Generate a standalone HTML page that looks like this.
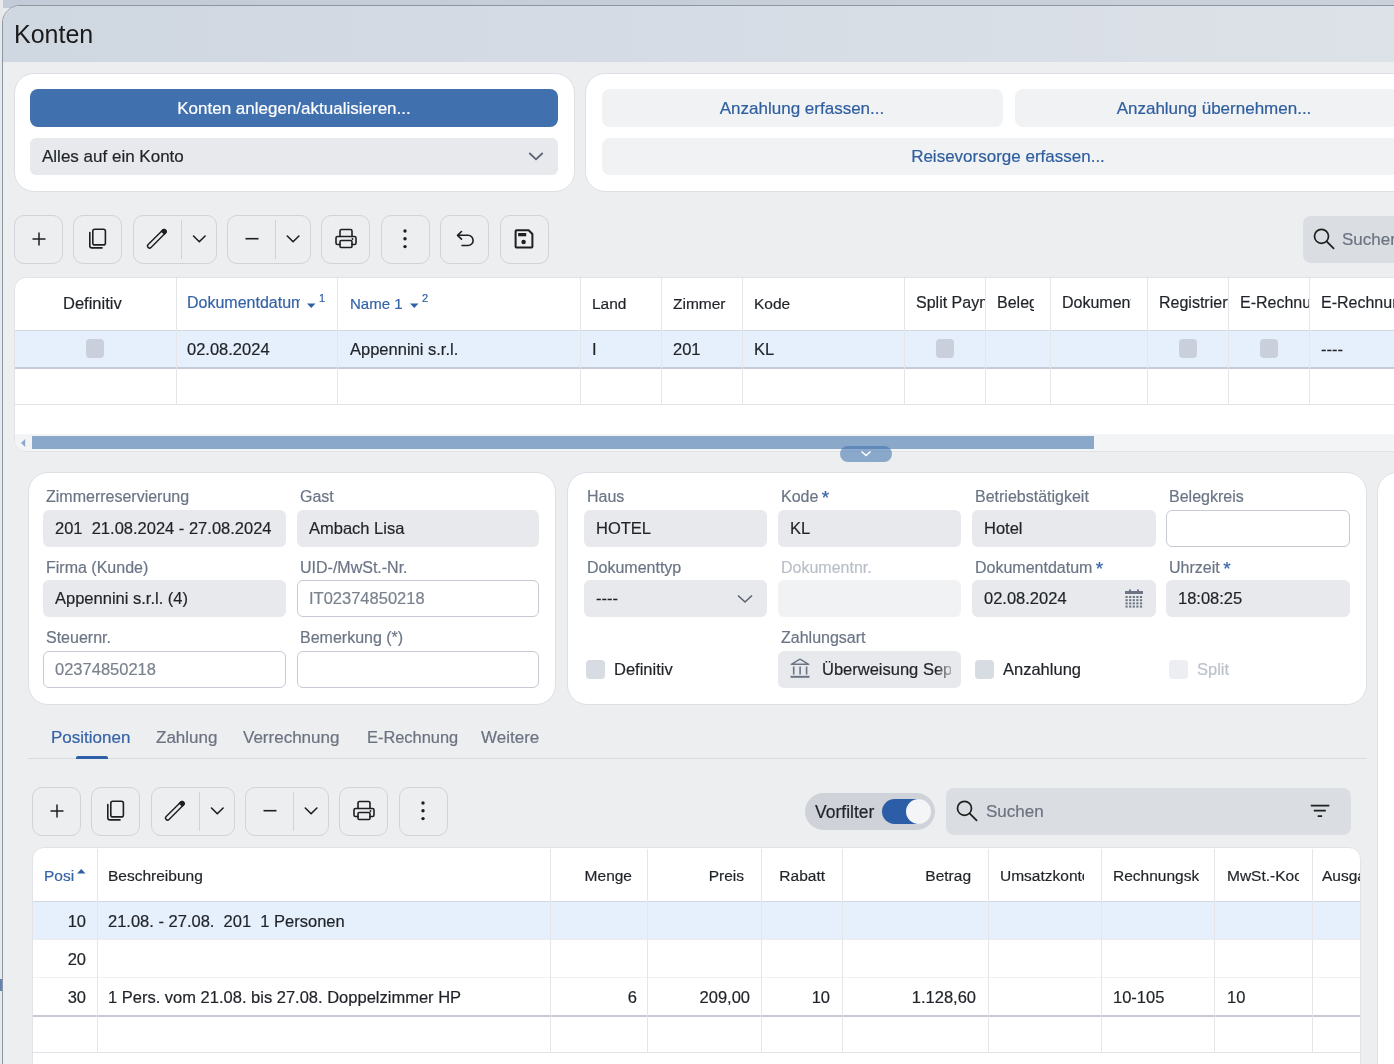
<!DOCTYPE html><html><head><meta charset="utf-8"><style>
*{box-sizing:border-box;margin:0;padding:0}
html,body{width:1394px;height:1064px;overflow:hidden;background:#e9ebee;font-family:"Liberation Sans",sans-serif;color:#1f2328}
.abs{position:absolute}
.t{position:absolute;white-space:nowrap;will-change:transform;-webkit-text-stroke:0.2px currentColor}
.card{position:absolute;background:#fff;border:1px solid #dcdfe4;border-radius:20px}
.tb{position:absolute;border:1px solid #d0d3d9;border-radius:10px;height:49px}
.cb{position:absolute;width:19px;height:19px;border-radius:4px;background:#d7dbe2}
.vl{position:absolute;width:1px;background:#e4e6ea}
.hl{position:absolute;height:1px;background:#e4e6ea}
</style></head><body>
<div class="abs" style="left:0px;top:0px;width:1394px;height:8px;background:linear-gradient(to right,#c2cbd7,#cbd1da);"></div>
<div class="abs" style="left:0px;top:0px;width:3px;height:1064px;background:#e8e9eb;"></div>
<div class="abs" style="left:0px;top:979px;width:2px;height:12px;background:#6283b3;"></div>
<div class="abs" style="left:2px;top:5px;width:1500px;height:1200px;border:1px solid #8d96a3;border-radius:18px 0 0 0;background:#edeef0;overflow:hidden"><div class="abs" style="left:0;top:0;width:1392px;height:56px;background:linear-gradient(to right,#cfd7e1,#d6dce5 50%,#dde2e8)"></div></div>
<div class="t" style="left:14px;top:21.84px;font-size:25px;line-height:25px;color:#1b1b1b;-webkit-text-stroke:0">Konten</div>
<div class="card" style="left:14px;top:73px;width:561px;height:119px"></div>
<div class="abs" style="left:30px;top:89px;width:528px;height:38px;background:#4170ae;border-radius:8px"></div>
<div class="t" style="left:94.0px;top:99.61px;font-size:17px;line-height:17px;color:#ffffff;width:400px;text-align:center;">Konten anlegen/aktualisieren...</div>
<div class="abs" style="left:30px;top:138px;width:528px;height:37px;background:#e8e9ec;border-radius:6px"></div>
<div class="t" style="left:42px;top:147.61px;font-size:17px;line-height:17px;color:#1f2328;">Alles auf ein Konto</div>
<svg class="abs" style="left:527px;top:150px" width="18" height="12"><path d="M2.3 3l6.7 6.3 6.7-6.3" stroke="#5a6270" stroke-width="1.8" fill="none"/></svg>
<div class="card" style="left:585px;top:73px;width:900px;height:119px"></div>
<div class="abs" style="left:602px;top:89px;width:401px;height:38px;background:#f1f2f4;border-radius:8px"></div>
<div class="abs" style="left:1015px;top:89px;width:400px;height:38px;background:#f1f2f4;border-radius:8px"></div>
<div class="abs" style="left:602px;top:138px;width:813px;height:37px;background:#f1f2f4;border-radius:8px"></div>
<div class="t" style="left:602.0px;top:99.61px;font-size:17px;line-height:17px;color:#2f5e9e;width:400px;text-align:center;">Anzahlung erfassen...</div>
<div class="t" style="left:1014.0px;top:99.61px;font-size:17px;line-height:17px;color:#2f5e9e;width:400px;text-align:center;">Anzahlung übernehmen...</div>
<div class="t" style="left:808.0px;top:147.61px;font-size:17px;line-height:17px;color:#2f5e9e;width:400px;text-align:center;">Reisevorsorge erfassen...</div>
<div class="tb" style="left:14px;top:215px;width:49px"></div>
<div class="tb" style="left:73px;top:215px;width:49px"></div>
<div class="tb" style="left:133px;top:215px;width:84px"></div>
<div class="tb" style="left:227px;top:215px;width:84px"></div>
<div class="tb" style="left:321px;top:215px;width:49px"></div>
<div class="tb" style="left:381px;top:215px;width:49px"></div>
<div class="tb" style="left:440px;top:215px;width:49px"></div>
<div class="tb" style="left:500px;top:215px;width:49px"></div>
<svg class="abs" style="left:0px;top:0px" width="600" height="300" viewBox="0 0 600 300"><path d="M39 232.5v13M32.5 239h13" stroke="#1f1f1f" stroke-width="1.5"/><rect x="92.8" y="229.3" width="12.6" height="15.6" rx="2" stroke="#1f1f1f" fill="none" stroke-width="1.6" stroke-linecap="round" stroke-linejoin="round"/><path d="M89.8 232.5v13.2a2.2 2.2 0 0 0 2.2 2.2h10" stroke="#1f1f1f" fill="none" stroke-width="1.6" stroke-linecap="round" stroke-linejoin="round"/><g transform="translate(156.8 238.8) rotate(-45)"><rect x="-12.2" y="-2" width="24.4" height="4" rx="2" stroke="#1f1f1f" fill="none" stroke-width="1.45"/><path d="M8 -2.7h2.3a2.7 2.7 0 0 1 0 5.4h-2.3z" fill="#1f1f1f"/></g><path d="M181.5 220v39M275.5 220v39" stroke="#d0d3d9" stroke-width="1"/><path d="M193.5 236l5.8 5.8 5.8-5.8M287.3 236l5.8 5.8 5.8-5.8" stroke="#1f1f1f" fill="none" stroke-width="1.6" stroke-linecap="round" stroke-linejoin="round"/><path d="M245.5 238.7h13" stroke="#1f1f1f" stroke-width="1.6"/><path d="M340 236.5v-5.5a1.5 1.5 0 0 1 1.5-1.5h9a1.5 1.5 0 0 1 1.5 1.5v5.5" stroke="#1f1f1f" fill="none" stroke-width="1.6" stroke-linecap="round" stroke-linejoin="round"/><path d="M340 244.5h-2.5a1.5 1.5 0 0 1-1.5-1.5v-5a1.5 1.5 0 0 1 1.5-1.5h17a1.5 1.5 0 0 1 1.5 1.5v5a1.5 1.5 0 0 1-1.5 1.5h-2.5" stroke="#1f1f1f" fill="none" stroke-width="1.6" stroke-linecap="round" stroke-linejoin="round"/><rect x="340" y="240.5" width="12" height="7" rx="1.2" stroke="#1f1f1f" fill="none" stroke-width="1.6" stroke-linecap="round" stroke-linejoin="round"/><circle cx="352.5" cy="239" r="0.9" fill="#1f1f1f"/><circle cx="405" cy="231" r="1.7" fill="#1f1f1f"/><circle cx="405" cy="238.8" r="1.7" fill="#1f1f1f"/><circle cx="405" cy="246.6" r="1.7" fill="#1f1f1f"/><path d="M461.5 231.5l-4 3.8 4 3.8M457.8 235.3h10.2a5.1 5.1 0 0 1 0 10.2h-6" stroke="#1f1f1f" fill="none" stroke-width="1.6" stroke-linecap="round" stroke-linejoin="round"/><path d="M515.6 231.4a1.2 1.2 0 0 1 1.2-1.2h11.8l3.8 3.8v12.4a1.2 1.2 0 0 1-1.2 1.2h-14.4a1.2 1.2 0 0 1-1.2-1.2z" stroke="#1f1f1f" fill="none" stroke-width="2" stroke-linejoin="round"/><rect x="518.2" y="233" width="8" height="3.3" fill="#1f1f1f"/><circle cx="523.6" cy="242" r="2.2" fill="#1f1f1f"/></svg>
<div class="abs" style="left:1303px;top:216px;width:200px;height:47px;background:#dadde2;border-radius:8px"></div>
<svg class="abs" style="left:1300px;top:220px" width="50" height="40"><circle cx="21.5" cy="16.3" r="7" stroke="#1f1f1f" stroke-width="1.7" fill="none"/><path d="M26.6 21.4l7 7" stroke="#1f1f1f" stroke-width="1.7" stroke-linecap="round"/></svg>
<div class="t" style="left:1342px;top:230.61px;font-size:17px;line-height:17px;color:#6b7380;">Suchen</div>
<div class="abs" style="left:14px;top:277px;width:1500px;height:175px;background:#fff;border:1px solid #dfe2e6;border-radius:12px 0 0 12px"></div>
<div class="abs" style="left:15px;top:331px;width:1480px;height:37px;background:#e6effc;"></div>
<div class="abs" style="left:15px;top:330px;width:1480px;height:1px;background:#d3d8e0;"></div>
<div class="abs" style="left:15px;top:367px;width:1480px;height:2px;background:#c6cbd4;"></div>
<div class="abs" style="left:15px;top:404px;width:1480px;height:1px;background:#dfe2e7;"></div>
<div class="vl" style="left:176px;top:278px;height:127px"></div>
<div class="vl" style="left:337px;top:278px;height:127px"></div>
<div class="vl" style="left:580px;top:278px;height:127px"></div>
<div class="vl" style="left:661px;top:278px;height:127px"></div>
<div class="vl" style="left:742px;top:278px;height:127px"></div>
<div class="vl" style="left:904px;top:278px;height:127px"></div>
<div class="vl" style="left:985px;top:278px;height:127px"></div>
<div class="vl" style="left:1050px;top:278px;height:127px"></div>
<div class="vl" style="left:1147px;top:278px;height:127px"></div>
<div class="vl" style="left:1228px;top:278px;height:127px"></div>
<div class="vl" style="left:1309px;top:278px;height:127px"></div>
<div class="t" style="left:63px;top:295.03px;font-size:16.5px;line-height:16.5px;color:#1f2328;">Definitiv</div>
<div class="t" style="left:187px;top:295.46px;font-size:16px;line-height:16px;color:#3563a6;width:113px;overflow:hidden;padding-bottom:5px;">Dokumentdatum</div>
<div class="t" style="left:350px;top:296.30px;font-size:15px;line-height:15px;color:#3563a6;">Name 1</div>
<div class="t" style="left:592px;top:295.88px;font-size:15.5px;line-height:15.5px;color:#1f2328;">Land</div>
<div class="t" style="left:673px;top:295.88px;font-size:15.5px;line-height:15.5px;color:#1f2328;">Zimmer</div>
<div class="t" style="left:754px;top:295.88px;font-size:15.5px;line-height:15.5px;color:#1f2328;">Kode</div>
<div class="t" style="left:916px;top:295.46px;font-size:16px;line-height:16px;color:#1f2328;width:69px;overflow:hidden;padding-bottom:5px;">Split Payment</div>
<div class="t" style="left:997px;top:295.46px;font-size:16px;line-height:16px;color:#1f2328;width:37px;overflow:hidden;padding-bottom:5px;">Belegkreis</div>
<div class="t" style="left:1062px;top:295.46px;font-size:16px;line-height:16px;color:#1f2328;width:69px;overflow:hidden;padding-bottom:5px;">Dokumentnr.</div>
<div class="t" style="left:1159px;top:295.46px;font-size:16px;line-height:16px;color:#1f2328;width:69px;overflow:hidden;padding-bottom:5px;">Registriert</div>
<div class="t" style="left:1240px;top:295.46px;font-size:16px;line-height:16px;color:#1f2328;width:69px;overflow:hidden;padding-bottom:5px;">E-Rechnung</div>
<div class="t" style="left:1321px;top:295.46px;font-size:16px;line-height:16px;color:#1f2328;width:200px;overflow:hidden;padding-bottom:5px;">E-Rechnung Status</div>
<svg class="abs" style="left:307px;top:303px" width="9" height="6"><path d="M0 0.5h8.5L4.25 5z" fill="#2f5fa5"/></svg>
<svg class="abs" style="left:410px;top:303px" width="9" height="6"><path d="M0 0.5h8.5L4.25 5z" fill="#2f5fa5"/></svg>
<div class="t" style="left:319px;top:293.19px;font-size:11px;line-height:11px;color:#2f5fa5;">1</div>
<div class="t" style="left:422px;top:293.19px;font-size:11px;line-height:11px;color:#2f5fa5;">2</div>
<div class="t" style="left:187px;top:341.03px;font-size:16.5px;line-height:16.5px;color:#1f2328;">02.08.2024</div>
<div class="t" style="left:350px;top:341.03px;font-size:16.5px;line-height:16.5px;color:#1f2328;">Appennini s.r.l.</div>
<div class="t" style="left:592px;top:341.03px;font-size:16.5px;line-height:16.5px;color:#1f2328;">I</div>
<div class="t" style="left:673px;top:341.03px;font-size:16.5px;line-height:16.5px;color:#1f2328;">201</div>
<div class="t" style="left:754px;top:341.03px;font-size:16.5px;line-height:16.5px;color:#1f2328;">KL</div>
<div class="t" style="left:1321px;top:341.03px;font-size:16.5px;line-height:16.5px;color:#1f2328;">----</div>
<div class="cb" style="left:86px;top:339px;width:18px;height:19px;background:#c9d0dc"></div>
<div class="cb" style="left:936px;top:339px;width:18px;height:19px;background:#c9d0dc"></div>
<div class="cb" style="left:1179px;top:339px;width:18px;height:19px;background:#c9d0dc"></div>
<div class="cb" style="left:1260px;top:339px;width:18px;height:19px;background:#c9d0dc"></div>
<div class="abs" style="left:15px;top:434px;width:1480px;height:17px;background:#f3f4f6;border-radius:0 0 0 11px"></div>
<div class="abs" style="left:32px;top:436px;width:1062px;height:13px;background:#8aa8ca;"></div>
<svg class="abs" style="left:20px;top:438px" width="7" height="10"><path d="M5.2 1v8L1 5z" fill="#8aa8ca"/></svg>
<div class="abs" style="left:840px;top:446px;width:52px;height:16px;background:rgba(62,114,173,0.57);border-radius:8px"></div>
<svg class="abs" style="left:860px;top:450px" width="12" height="8"><path d="M1.5 1.5l4.5 4 4.5-4" stroke="#fff" stroke-width="1.6" fill="none"/></svg>
<div class="card" style="left:28px;top:472px;width:528px;height:233px"></div>
<div class="card" style="left:567px;top:472px;width:800px;height:233px"></div>
<div class="card" style="left:1377px;top:472px;width:200px;height:700px"></div>
<div class="t" style="left:46px;top:489.46px;font-size:16px;line-height:16px;color:#6b7585;">Zimmerreservierung</div>
<div class="t" style="left:300px;top:489.46px;font-size:16px;line-height:16px;color:#6b7585;">Gast</div>
<div class="t" style="left:46px;top:560.46px;font-size:16px;line-height:16px;color:#6b7585;">Firma (Kunde)</div>
<div class="t" style="left:300px;top:560.46px;font-size:16px;line-height:16px;color:#6b7585;">UID-/MwSt.-Nr.</div>
<div class="t" style="left:46px;top:630.46px;font-size:16px;line-height:16px;color:#6b7585;">Steuernr.</div>
<div class="t" style="left:300px;top:630.46px;font-size:16px;line-height:16px;color:#6b7585;">Bemerkung (*)</div>
<div class="abs" style="left:43px;top:510px;width:243px;height:37px;background:#e8e9ec;border-radius:6px"></div>
<div class="t" style="left:55px;top:520.03px;font-size:16.5px;line-height:16.5px;color:#1f2328;">201&nbsp; 21.08.2024 - 27.08.2024</div>
<div class="abs" style="left:297px;top:510px;width:242px;height:37px;background:#e8e9ec;border-radius:6px"></div>
<div class="t" style="left:309px;top:520.03px;font-size:16.5px;line-height:16.5px;color:#1f2328;">Ambach Lisa</div>
<div class="abs" style="left:43px;top:580px;width:243px;height:37px;background:#e8e9ec;border-radius:6px"></div>
<div class="t" style="left:55px;top:590.03px;font-size:16.5px;line-height:16.5px;color:#1f2328;">Appennini s.r.l. (4)</div>
<div class="abs" style="left:297px;top:580px;width:242px;height:37px;background:#fff;border:1px solid #c6cad2;border-radius:6px"></div>
<div class="t" style="left:309px;top:590.03px;font-size:16.5px;line-height:16.5px;color:#7a828e;">IT02374850218</div>
<div class="abs" style="left:43px;top:651px;width:243px;height:37px;background:#fff;border:1px solid #c6cad2;border-radius:6px"></div>
<div class="t" style="left:55px;top:661.03px;font-size:16.5px;line-height:16.5px;color:#7a828e;">02374850218</div>
<div class="abs" style="left:297px;top:651px;width:242px;height:37px;background:#fff;border:1px solid #c6cad2;border-radius:6px"></div>
<div class="t" style="left:587px;top:489.46px;font-size:16px;line-height:16px;color:#6b7585;">Haus</div>
<div class="t" style="left:781px;top:489.46px;font-size:16px;line-height:16px;color:#6b7585;">Kode <span style="color:#3565a8;font-size:19px;line-height:0;position:relative;top:1.5px;margin-left:-1px">*</span></div>
<div class="t" style="left:975px;top:489.46px;font-size:16px;line-height:16px;color:#6b7585;">Betriebstätigkeit</div>
<div class="t" style="left:1169px;top:489.46px;font-size:16px;line-height:16px;color:#6b7585;">Belegkreis</div>
<div class="t" style="left:587px;top:560.46px;font-size:16px;line-height:16px;color:#6b7585;">Dokumenttyp</div>
<div class="t" style="left:781px;top:560.46px;font-size:16px;line-height:16px;color:#b9bfc8;">Dokumentnr.</div>
<div class="t" style="left:975px;top:560.46px;font-size:16px;line-height:16px;color:#6b7585;">Dokumentdatum <span style="color:#3565a8;font-size:19px;line-height:0;position:relative;top:1.5px;margin-left:-1px">*</span></div>
<div class="t" style="left:1169px;top:560.46px;font-size:16px;line-height:16px;color:#6b7585;">Uhrzeit <span style="color:#3565a8;font-size:19px;line-height:0;position:relative;top:1.5px;margin-left:-1px">*</span></div>
<div class="t" style="left:781px;top:630.46px;font-size:16px;line-height:16px;color:#6b7585;">Zahlungsart</div>
<div class="abs" style="left:584px;top:510px;width:183px;height:37px;background:#e8e9ec;border-radius:6px"></div>
<div class="t" style="left:596px;top:520.03px;font-size:16.5px;line-height:16.5px;color:#1f2328;">HOTEL</div>
<div class="abs" style="left:778px;top:510px;width:183px;height:37px;background:#e8e9ec;border-radius:6px"></div>
<div class="t" style="left:790px;top:520.03px;font-size:16.5px;line-height:16.5px;color:#1f2328;">KL</div>
<div class="abs" style="left:972px;top:510px;width:184px;height:37px;background:#e8e9ec;border-radius:6px"></div>
<div class="t" style="left:984px;top:520.03px;font-size:16.5px;line-height:16.5px;color:#1f2328;">Hotel</div>
<div class="abs" style="left:1166px;top:510px;width:184px;height:37px;background:#fff;border:1px solid #c6cad2;border-radius:6px"></div>
<div class="abs" style="left:584px;top:580px;width:183px;height:37px;background:#e8e9ec;border-radius:6px"></div>
<div class="t" style="left:596px;top:590.03px;font-size:16.5px;line-height:16.5px;color:#1f2328;">----</div>
<svg class="abs" style="left:736px;top:593px" width="18" height="12"><path d="M2 2.5l7 6.5 7-6.5" stroke="#5a6270" stroke-width="1.6" fill="none"/></svg>
<div class="abs" style="left:778px;top:580px;width:183px;height:37px;background:#f1f2f4;border-radius:6px"></div>
<div class="abs" style="left:972px;top:580px;width:184px;height:37px;background:#e8e9ec;border-radius:6px"></div>
<div class="t" style="left:984px;top:590.03px;font-size:16.5px;line-height:16.5px;color:#1f2328;">02.08.2024</div>
<div class="abs" style="left:1166px;top:580px;width:184px;height:37px;background:#e8e9ec;border-radius:6px"></div>
<div class="t" style="left:1178px;top:590.03px;font-size:16.5px;line-height:16.5px;color:#1f2328;">18:08:25</div>
<svg class="abs" style="left:1124px;top:589px" width="20" height="20"><rect x="1" y="2" width="18" height="3" fill="#6b7585"/><rect x="5" y="0.5" width="2" height="3" fill="#6b7585"/><rect x="13" y="0.5" width="2" height="3" fill="#6b7585"/><rect x="1.5" y="7.0" width="2.2" height="2" fill="#6b7585"/><rect x="1.5" y="10.2" width="2.2" height="2" fill="#6b7585"/><rect x="1.5" y="13.4" width="2.2" height="2" fill="#6b7585"/><rect x="1.5" y="16.6" width="2.2" height="2" fill="#6b7585"/><rect x="5.1" y="7.0" width="2.2" height="2" fill="#6b7585"/><rect x="5.1" y="10.2" width="2.2" height="2" fill="#6b7585"/><rect x="5.1" y="13.4" width="2.2" height="2" fill="#6b7585"/><rect x="5.1" y="16.6" width="2.2" height="2" fill="#6b7585"/><rect x="8.7" y="7.0" width="2.2" height="2" fill="#6b7585"/><rect x="8.7" y="10.2" width="2.2" height="2" fill="#6b7585"/><rect x="8.7" y="13.4" width="2.2" height="2" fill="#6b7585"/><rect x="8.7" y="16.6" width="2.2" height="2" fill="#6b7585"/><rect x="12.3" y="7.0" width="2.2" height="2" fill="#6b7585"/><rect x="12.3" y="10.2" width="2.2" height="2" fill="#6b7585"/><rect x="12.3" y="13.4" width="2.2" height="2" fill="#6b7585"/><rect x="12.3" y="16.6" width="2.2" height="2" fill="#6b7585"/><rect x="15.9" y="7.0" width="2.2" height="2" fill="#6b7585"/><rect x="15.9" y="10.2" width="2.2" height="2" fill="#6b7585"/><rect x="15.9" y="13.4" width="2.2" height="2" fill="#6b7585"/><rect x="15.9" y="16.6" width="2.2" height="2" fill="#6b7585"/></svg>
<div class="abs" style="left:778px;top:651px;width:183px;height:37px;background:#e8e9ec;border-radius:6px"></div>
<svg class="abs" style="left:789px;top:658px" width="22" height="22"><path d="M2.3 6.3L11 1.2l8.7 5.1z" stroke="#6b7585" stroke-width="1.5" fill="none" stroke-linejoin="round"/><path d="M4.7 8.5v8M11.1 8.5v8M17.6 8.5v8" stroke="#6b7585" stroke-width="1.6"/><path d="M1.5 18.8h19" stroke="#6b7585" stroke-width="2"/></svg>
<div class="t" style="left:822px;top:661.03px;font-size:16.5px;line-height:16.5px;color:#1f2328;width:129px;overflow:hidden;padding-bottom:5px;-webkit-mask-image:linear-gradient(to right,#000 88%,rgba(0,0,0,0.3))">Überweisung Sepa</div>
<div class="cb" style="left:586px;top:660px;background:#d7dbe2"></div>
<div class="t" style="left:614px;top:661.03px;font-size:16.5px;line-height:16.5px;color:#1f2328;">Definitiv</div>
<div class="cb" style="left:975px;top:660px;background:#d7dbe2"></div>
<div class="t" style="left:1003px;top:661.03px;font-size:16.5px;line-height:16.5px;color:#1f2328;">Anzahlung</div>
<div class="cb" style="left:1169px;top:660px;background:#eceef1"></div>
<div class="t" style="left:1197px;top:661.03px;font-size:16.5px;line-height:16.5px;color:#bcc2ca;">Split</div>
<div class="t" style="left:51px;top:728.61px;font-size:17px;line-height:17px;color:#3563a6;">Positionen</div>
<div class="t" style="left:156px;top:728.61px;font-size:17px;line-height:17px;color:#6b7280;">Zahlung</div>
<div class="t" style="left:243px;top:728.61px;font-size:17px;line-height:17px;color:#6b7280;">Verrechnung</div>
<div class="t" style="left:367px;top:729.12px;font-size:16.4px;line-height:16.4px;color:#6b7280;">E-Rechnung</div>
<div class="t" style="left:481px;top:728.61px;font-size:17px;line-height:17px;color:#6b7280;">Weitere</div>
<div class="abs" style="left:28px;top:758px;width:1339px;height:1px;background:#d8dbe0;"></div>
<div class="abs" style="left:76px;top:756px;width:32px;height:3px;background:#2c5fa8;border-radius:2px 2px 0 0"></div>
<div class="tb" style="left:32px;top:787px;width:49px"></div>
<div class="tb" style="left:91px;top:787px;width:49px"></div>
<div class="tb" style="left:151px;top:787px;width:84px"></div>
<div class="tb" style="left:245px;top:787px;width:84px"></div>
<div class="tb" style="left:339px;top:787px;width:49px"></div>
<div class="tb" style="left:399px;top:787px;width:49px"></div>
<svg class="abs" style="left:18px;top:572px" width="600" height="300" viewBox="0 0 600 300"><path d="M39 232.5v13M32.5 239h13" stroke="#1f1f1f" stroke-width="1.5"/><rect x="92.8" y="229.3" width="12.6" height="15.6" rx="2" stroke="#1f1f1f" fill="none" stroke-width="1.6" stroke-linecap="round" stroke-linejoin="round"/><path d="M89.8 232.5v13.2a2.2 2.2 0 0 0 2.2 2.2h10" stroke="#1f1f1f" fill="none" stroke-width="1.6" stroke-linecap="round" stroke-linejoin="round"/><g transform="translate(156.8 238.8) rotate(-45)"><rect x="-12.2" y="-2" width="24.4" height="4" rx="2" stroke="#1f1f1f" fill="none" stroke-width="1.45"/><path d="M8 -2.7h2.3a2.7 2.7 0 0 1 0 5.4h-2.3z" fill="#1f1f1f"/></g><path d="M181.5 220v39M275.5 220v39" stroke="#d0d3d9" stroke-width="1"/><path d="M193.5 236l5.8 5.8 5.8-5.8M287.3 236l5.8 5.8 5.8-5.8" stroke="#1f1f1f" fill="none" stroke-width="1.6" stroke-linecap="round" stroke-linejoin="round"/><path d="M245.5 238.7h13" stroke="#1f1f1f" stroke-width="1.6"/><path d="M340 236.5v-5.5a1.5 1.5 0 0 1 1.5-1.5h9a1.5 1.5 0 0 1 1.5 1.5v5.5" stroke="#1f1f1f" fill="none" stroke-width="1.6" stroke-linecap="round" stroke-linejoin="round"/><path d="M340 244.5h-2.5a1.5 1.5 0 0 1-1.5-1.5v-5a1.5 1.5 0 0 1 1.5-1.5h17a1.5 1.5 0 0 1 1.5 1.5v5a1.5 1.5 0 0 1-1.5 1.5h-2.5" stroke="#1f1f1f" fill="none" stroke-width="1.6" stroke-linecap="round" stroke-linejoin="round"/><rect x="340" y="240.5" width="12" height="7" rx="1.2" stroke="#1f1f1f" fill="none" stroke-width="1.6" stroke-linecap="round" stroke-linejoin="round"/><circle cx="352.5" cy="239" r="0.9" fill="#1f1f1f"/><circle cx="405" cy="231" r="1.7" fill="#1f1f1f"/><circle cx="405" cy="238.8" r="1.7" fill="#1f1f1f"/><circle cx="405" cy="246.6" r="1.7" fill="#1f1f1f"/></svg>
<div class="abs" style="left:805px;top:793px;width:130px;height:37px;background:#cfd2d8;border-radius:18.5px"></div>
<div class="t" style="left:815px;top:803.69px;font-size:17.5px;line-height:17.5px;color:#1f2328;">Vorfilter</div>
<div class="abs" style="left:882px;top:799px;width:47px;height:25px;background:#2b5ea7;border-radius:12.5px"></div>
<div class="abs" style="left:906px;top:799px;width:25px;height:25px;border-radius:12.5px;background:#f4f5f7"></div>
<div class="abs" style="left:946px;top:788px;width:405px;height:47px;background:#dadde2;border-radius:8px"></div>
<svg class="abs" style="left:950px;top:795px" width="40" height="32"><circle cx="14.5" cy="13.3" r="7" stroke="#1f1f1f" stroke-width="1.7" fill="none"/><path d="M19.6 18.4l7 7" stroke="#1f1f1f" stroke-width="1.7" stroke-linecap="round"/></svg>
<div class="t" style="left:986px;top:803.11px;font-size:17px;line-height:17px;color:#6b7380;">Suchen</div>
<svg class="abs" style="left:1300px;top:795px" width="40" height="30"><path d="M10.8 10.7h18.5M13.8 15.7h12M17.7 21.2h4.4" stroke="#1f1f1f" stroke-width="1.8"/></svg>
<div class="abs" style="left:32px;top:847px;width:1329px;height:300px;background:#fff;border:1px solid #e1e3e7;border-radius:12px 12px 0 0"></div>
<div class="abs" style="left:33px;top:902px;width:1327px;height:37px;background:#e6effc;"></div>
<div class="abs" style="left:33px;top:901px;width:1327px;height:1px;background:#d3d8e0;"></div>
<div class="abs" style="left:33px;top:939px;width:1327px;height:1px;background:#e9ebee;"></div>
<div class="abs" style="left:33px;top:977px;width:1327px;height:1px;background:#f0f1f3;"></div>
<div class="abs" style="left:33px;top:1015px;width:1327px;height:2px;background:#c6cbd4;"></div>
<div class="abs" style="left:33px;top:1052px;width:1327px;height:1px;background:#dfe2e7;"></div>
<div class="vl" style="left:97px;top:849px;height:204px"></div>
<div class="vl" style="left:550px;top:849px;height:204px"></div>
<div class="vl" style="left:647px;top:849px;height:204px"></div>
<div class="vl" style="left:761px;top:849px;height:204px"></div>
<div class="vl" style="left:842px;top:849px;height:204px"></div>
<div class="vl" style="left:988px;top:849px;height:204px"></div>
<div class="vl" style="left:1101px;top:849px;height:204px"></div>
<div class="vl" style="left:1214px;top:849px;height:204px"></div>
<div class="vl" style="left:1312px;top:849px;height:204px"></div>
<div class="t" style="left:44px;top:867.88px;font-size:15.5px;line-height:15.5px;color:#3563a6;">Posi</div>
<svg class="abs" style="left:77px;top:868px" width="9" height="6"><path d="M0 5.5h8.5L4.25 1z" fill="#2f5fa5"/></svg>
<div class="t" style="left:108px;top:867.88px;font-size:15.5px;line-height:15.5px;color:#1f2328;">Beschreibung</div>
<div class="t" style="left:512px;top:867.88px;font-size:15.5px;line-height:15.5px;color:#1f2328;width:120px;text-align:right;">Menge</div>
<div class="t" style="left:624px;top:867.88px;font-size:15.5px;line-height:15.5px;color:#1f2328;width:120px;text-align:right;">Preis</div>
<div class="t" style="left:705px;top:867.88px;font-size:15.5px;line-height:15.5px;color:#1f2328;width:120px;text-align:right;">Rabatt</div>
<div class="t" style="left:851px;top:867.88px;font-size:15.5px;line-height:15.5px;color:#1f2328;width:120px;text-align:right;">Betrag</div>
<div class="t" style="left:1000px;top:867.88px;font-size:15.5px;line-height:15.5px;color:#1f2328;width:84px;overflow:hidden;padding-bottom:5px;">Umsatzkonto</div>
<div class="t" style="left:1113px;top:867.88px;font-size:15.5px;line-height:15.5px;color:#1f2328;width:86px;overflow:hidden;padding-bottom:5px;">Rechnungskreis</div>
<div class="t" style="left:1227px;top:867.88px;font-size:15.5px;line-height:15.5px;color:#1f2328;width:72px;overflow:hidden;padding-bottom:5px;">MwSt.-Kode</div>
<div class="t" style="left:1322px;top:867.88px;font-size:15.5px;line-height:15.5px;color:#1f2328;width:38px;overflow:hidden;padding-bottom:5px;">Ausgabe</div>
<div class="t" style="left:26px;top:913.03px;font-size:16.5px;line-height:16.5px;color:#1f2328;width:60px;text-align:right;">10</div>
<div class="t" style="left:26px;top:951.03px;font-size:16.5px;line-height:16.5px;color:#1f2328;width:60px;text-align:right;">20</div>
<div class="t" style="left:26px;top:989.03px;font-size:16.5px;line-height:16.5px;color:#1f2328;width:60px;text-align:right;">30</div>
<div class="t" style="left:108px;top:913.03px;font-size:16.5px;line-height:16.5px;color:#1f2328;">21.08. - 27.08.&nbsp; 201&nbsp; 1 Personen</div>
<div class="t" style="left:108px;top:989.03px;font-size:16.5px;line-height:16.5px;color:#1f2328;">1 Pers. vom 21.08. bis 27.08. Doppelzimmer HP</div>
<div class="t" style="left:517px;top:989.03px;font-size:16.5px;line-height:16.5px;color:#1f2328;width:120px;text-align:right;">6</div>
<div class="t" style="left:630px;top:989.03px;font-size:16.5px;line-height:16.5px;color:#1f2328;width:120px;text-align:right;">209,00</div>
<div class="t" style="left:710px;top:989.03px;font-size:16.5px;line-height:16.5px;color:#1f2328;width:120px;text-align:right;">10</div>
<div class="t" style="left:856px;top:989.03px;font-size:16.5px;line-height:16.5px;color:#1f2328;width:120px;text-align:right;">1.128,60</div>
<div class="t" style="left:1113px;top:989.03px;font-size:16.5px;line-height:16.5px;color:#1f2328;">10-105</div>
<div class="t" style="left:1227px;top:989.03px;font-size:16.5px;line-height:16.5px;color:#1f2328;">10</div>
</body></html>
